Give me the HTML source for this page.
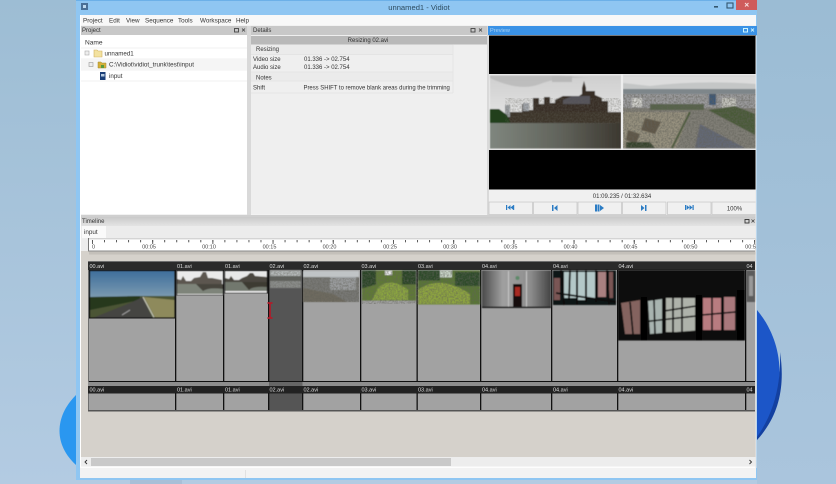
<!DOCTYPE html>
<html><head><meta charset="utf-8"><style>
html,body{margin:0;padding:0;width:836px;height:484px;overflow:hidden;background:#a6c2da}
svg{display:block;position:absolute;left:0;top:0}
text{font-family:"Liberation Sans",sans-serif;font-size:6px;fill:#333}
.w text{fill:#ddd;font-size:5.5px}
.r text{font-size:5.5px;fill:#444}
</style></head><body>
<svg width="836" height="484" viewBox="0 0 836 484" xmlns="http://www.w3.org/2000/svg">
<defs>
<linearGradient id="bg" x1="0" y1="0" x2="0" y2="1"><stop offset="0" stop-color="#9dbdd4"/><stop offset="1" stop-color="#b3cbe2"/></linearGradient>
<linearGradient id="bgr" x1="0" y1="0" x2="0" y2="1"><stop offset="0" stop-color="#9bbcd4"/><stop offset="1" stop-color="#aac5dd"/></linearGradient>
<linearGradient id="hd" x1="0" y1="0" x2="0" y2="1"><stop offset="0" stop-color="#c4c4c4"/><stop offset="1" stop-color="#e4e4e4"/></linearGradient>
<linearGradient id="sky1" x1="0" y1="0" x2="0" y2="1"><stop offset="0" stop-color="#3f6f9c"/><stop offset="0.6" stop-color="#7f9db2"/><stop offset="1" stop-color="#c0c8c4"/></linearGradient>
<linearGradient id="sky2" x1="0" y1="0" x2="0" y2="1"><stop offset="0" stop-color="#cfcfcf"/><stop offset="1" stop-color="#f2f2f2"/></linearGradient>
<linearGradient id="wat" x1="0" y1="0" x2="1" y2="0"><stop offset="0" stop-color="#7f867e"/><stop offset="0.55" stop-color="#60625a"/><stop offset="1" stop-color="#3c3830"/></linearGradient>
<linearGradient id="met" x1="0" y1="0" x2="1" y2="0"><stop offset="0" stop-color="#4a4a4a"/><stop offset="0.3" stop-color="#a0a0a0"/><stop offset="0.7" stop-color="#8e8e8e"/><stop offset="1" stop-color="#444"/></linearGradient>
<pattern id="t1" x="92" y="0" width="12.04" height="10" patternUnits="userSpaceOnUse"><rect x="0" y="0" width="0.8" height="3" fill="#666"/></pattern>
<pattern id="t2" x="92" y="0" width="60.2" height="10" patternUnits="userSpaceOnUse"><rect x="0" y="0" width="0.9" height="5" fill="#555"/></pattern>
<pattern id="t3" x="104" y="0" width="12.04" height="10" patternUnits="userSpaceOnUse"><rect x="0" y="0" width="0.9" height="3.600" fill="#222"/></pattern>
<filter id="b" x="-5%" y="-5%" width="110%" height="110%"><feGaussianBlur stdDeviation="0.55"/></filter>
<filter id="tb" x="-5%" y="-5%" width="110%" height="110%"><feGaussianBlur stdDeviation="0.25"/></filter>
<filter id="n" x="0" y="0" width="100%" height="100%"><feTurbulence type="fractalNoise" baseFrequency="0.55" numOctaves="2" seed="4"/><feColorMatrix values="0 0 0 0 .12  0 0 0 0 .12  0 0 0 0 .1  2.2 0 0 0 -.75"/></filter>
</defs>

<!-- desktop -->
<rect width="836" height="484" fill="url(#bg)"/>
<rect x="757" width="79" height="484" fill="url(#bgr)"/>
<path d="M76 395C54 417 54 445 76 465Z" fill="#2a97f0"/>
<path d="M757 310C786 345 788 395 757 440Z" fill="#1c56c8"/>
<path d="M757 437C776 410 781 380 780 352C785 385 780 415 757 440Z" fill="#1340a0"/>

<!-- window -->
<rect x="76" y="0" width="681" height="480" fill="#8fc6f2"/>
<rect x="76" y="0" width="681" height="1" fill="#6cb0e8"/>
<rect x="80" y="15" width="676" height="463" fill="#f2f2f2"/>
<rect x="80" y="15" width="676" height="10" fill="#f8f8f8"/>
<rect x="81" y="3" width="7" height="7" fill="#4a6f96"/>
<rect x="83" y="5" width="3" height="3" fill="#bcd8ee"/>
<text x="419" y="10" text-anchor="middle" style="font-size:7.6px;fill:#2e4c60">unnamed1 - Vidiot</text>
<rect x="736" y="0" width="21" height="10" fill="#cf5b5b"/>
<path d="M745 3l3.500 3.500M748.500 3L745 6.500" stroke="#f6dede" stroke-width="1"/>
<rect x="714" y="6" width="4" height="1.600" fill="#33566e"/>
<rect x="727" y="3" width="6" height="5" fill="none" stroke="#33566e" stroke-width="1.100"/>

<g filter="url(#tb)">
<text x="83" y="22.500" style="font-size:6.300px">Project</text><text x="109" y="22.500" style="font-size:6.300px">Edit</text><text x="126" y="22.500" style="font-size:6.300px">View</text>
<text x="145" y="22.500" style="font-size:6.300px">Sequence</text><text x="178" y="22.500" style="font-size:6.300px">Tools</text><text x="200" y="22.500" style="font-size:6.300px">Workspace</text><text x="236" y="22.500" style="font-size:6.300px">Help</text>
</g>

<!-- Project panel -->
<rect x="81" y="26" width="167" height="9" fill="#c8c8c8"/>
<text x="82" y="32">Project</text>
<rect x="234.500" y="28.500" width="4" height="3.500" fill="none" stroke="#444" stroke-width="0.900"/>
<path d="M242 28.500l3 3M245 28.500l-3 3" stroke="#444" stroke-width="0.800"/>
<rect x="81" y="35" width="166" height="179" fill="#fff"/>
<rect x="247" y="26" width="4" height="190" fill="#d9d9d9"/>
<text x="85" y="44.500" style="font-size:6.600px">Name</text>
<path d="M81 48H247M81 59H247M81 70H247M81 81H247" stroke="#eee" stroke-width="0.700"/>
<rect x="81" y="59" width="166" height="11" fill="#f5f5f5"/>
<rect x="85" y="51" width="4" height="4" fill="#eee" stroke="#aaa" stroke-width="0.600"/>
<path d="M94 50h3l1 1h4v6h-8z" fill="#f3e2a0" stroke="#d0b060" stroke-width="0.600"/>
<text x="104.500" y="55.500" style="font-size:6.200px">unnamed1</text>
<rect x="89" y="62.500" width="4" height="4" fill="#eee" stroke="#999" stroke-width="0.600"/>
<path d="M98 62h3l1 1h4v5h-8z" fill="#d5b03a" stroke="#a08a30" stroke-width="0.500"/>
<rect x="101" y="65" width="3" height="3" fill="#5a9a3a"/>
<text x="109" y="66.500" style="font-size:6.300px">C:\Vidiot\vidiot_trunk\test\input</text>
<rect x="100" y="72" width="5.500" height="8" fill="#1c3f78"/><rect x="101" y="74" width="3.500" height="2.500" fill="#b8cce0"/>
<text x="109" y="78" style="font-size:6.200px">input</text>

<!-- Details panel -->
<rect x="251" y="26" width="236" height="9" fill="#c8c8c8"/>
<text x="253" y="32">Details</text>
<rect x="471" y="28.500" width="4" height="3.500" fill="none" stroke="#444" stroke-width="0.900"/>
<path d="M479 28.500l3 3M482 28.500l-3 3" stroke="#444" stroke-width="0.800"/>
<rect x="251" y="35" width="236" height="179" fill="#efefef"/>
<rect x="251" y="36" width="236" height="8.500" fill="#b9b9b9"/>
<text x="368" y="42" text-anchor="middle">Resizing 02.avi</text>
<rect x="251" y="44.500" width="202" height="10" fill="#ebebeb"/>
<rect x="251" y="72" width="202" height="9" fill="#ebebeb"/>
<path d="M251 54.500H453M251 72H453M251 81H453M251 93H453M453 45V93" stroke="#e2e2e2" stroke-width="0.700"/>
<text x="256" y="51">Resizing</text>
<text x="253" y="61">Video size</text><text x="304" y="61">01.336 -&gt; 02.754</text>
<text x="253" y="69">Audio size</text><text x="304" y="69">01.336 -&gt; 02.754</text>
<text x="256" y="79.500">Notes</text>
<text x="253" y="89.500">Shift</text><text x="303.500" y="89.500" style="font-size:5.930px">Press SHIFT to remove blank areas during the trimming</text>
<rect x="487" y="26" width="2" height="190" fill="#d9d9d9"/>

<!-- Preview panel -->
<rect x="488" y="26" width="269" height="9" fill="#3a92e6"/>
<text x="490" y="32" style="fill:#a8d0f2;font-size:5.600px">Preview</text>
<rect x="743.500" y="28.500" width="4" height="3.500" fill="none" stroke="#dff" stroke-width="0.900"/>
<path d="M751 28.500l3 3M754 28.500l-3 3" stroke="#dff" stroke-width="0.800"/>
<rect x="489" y="35.500" width="267" height="154" fill="#000"/>
<rect x="489" y="74" width="267" height="76" fill="#e8e8e8"/>
<g filter="url(#b)">
<rect x="490" y="75.500" width="131" height="73" fill="url(#sky2)"/>
<path d="M490 78Q520 92 540 84T590 78L560 75.500H490Z" fill="#b4b4b4" opacity=".7"/>
<rect x="552" y="76" width="20" height="6" fill="#b8b8b8"/>
<path d="M505 122V106h5v6h12V104h5v6h6V98h6v6h5V97h6v6h5v-3l8-4h16l3-2V88l2-7 2 7v3h9v4l7 3v3h6V124H505Z" fill="#372e26"/>
<path d="M563 100L572 96H590V104H563Z" fill="#55525a"/>
<rect x="505" y="105" width="5" height="12" fill="#9ca0a4"/><rect x="523" y="103" width="6" height="8" fill="#a0a4aa"/>
<path d="M490 109h9l8 6 4 9H490Z" fill="#24401f"/>
<path d="M510 112H621V124H510Z" fill="#3e342a"/>
<rect x="490" y="123" width="131" height="25.500" fill="url(#wat)"/>
<rect x="623" y="75.500" width="133" height="73" fill="#807e76"/>
<rect x="623" y="75.500" width="133" height="16" fill="#c4c6c6"/>
<path d="M623 76H756V84Q700 80 650 86L623 83Z" fill="#dcdcdc"/>
<rect x="623" y="89" width="133" height="5" fill="#7e868a"/>
<path d="M623 94H756V108H623Z" fill="#9a9a9c"/>
<path d="M650 104H704V110H650Z" fill="#56644a"/>
<rect x="709" y="94" width="7" height="11" fill="#3d5878"/><rect x="632" y="98" width="10" height="9" fill="#d4d4d0"/><rect x="722" y="98" width="14" height="12" fill="#c4c4be"/>
<path d="M708 110L755 135V114L735 106Z" fill="#4a5a38"/>
<path d="M623 112H690L676 148H623Z" fill="#96907e"/>
<path d="M645 118l16 4-6 12-14-4ZM628 130l12 4-4 10-10-4Z" fill="#5e5646"/>
<path d="M700 124L745 148H695Z" fill="#646874"/>
<path d="M626 142H650L655 148H626Z" fill="#36422a"/>
<path d="M690 112L672 148" stroke="#4a5a38" stroke-width="2"/>
</g>
<rect x="505" y="98" width="116" height="26" filter="url(#n)" opacity=".35"/>
<rect x="623" y="94" width="133" height="54" filter="url(#n)" opacity=".6"/>
<rect x="621" y="74" width="2" height="76" fill="#eee"/>
<rect x="489" y="190" width="267" height="11" fill="#f0f0f0"/>
<text x="622" y="198" text-anchor="middle" style="font-size:6px">01:09.235 / 01:32.634</text>
<g fill="#f0f0f0" stroke="#c4c4c4" stroke-width="0.700">
<rect x="489" y="202" width="43.500" height="12.500"/><rect x="533.500" y="202" width="43.500" height="12.500"/><rect x="578" y="202" width="43.500" height="12.500"/><rect x="622.500" y="202" width="43.500" height="12.500"/><rect x="667.500" y="202" width="43.500" height="12.500"/><rect x="712" y="202" width="44" height="12.500"/>
</g>
<g fill="#2b7cc4">
<path d="M506 205h1.200v5h-1.200zM507.500 207.500l3-2.500v5zM510.500 207.500l3-2.500v5zM513.200 205h1v5h-1z"/>
<path d="M552 205h1.500v6H552zM554 208l3.500-3v6z"/>
<path d="M595 204.500h2v7h-2zM597.500 204.500h2v7h-2zM600 205l4 3-4 3z"/>
<path d="M641 205l3.500 3-3.500 3zM645 205h1.500v6H645z"/>
<path d="M685 205h1v5h-1zM686.500 205l3 2.500-3 2.500zM689.500 205l3 2.500-3 2.500zM692.500 205h1.200v5h-1.200z"/>
</g>
<text x="734.500" y="210.500" text-anchor="middle">100%</text>

<!-- Timeline panel -->
<rect x="80" y="215" width="676" height="11" fill="url(#hd)"/>
<rect x="80" y="215" width="676" height="2" fill="#cfcfcf"/>
<text x="82" y="223">Timeline</text>
<rect x="745" y="219.500" width="4" height="3.500" fill="none" stroke="#333" stroke-width="0.900"/>
<path d="M751.500 219.500l3 3M754.500 219.500l-3 3" stroke="#444" stroke-width="0.800"/>
<rect x="80" y="226" width="676" height="12" fill="#ececec"/>
<rect x="82" y="226" width="24" height="12" fill="#fafafa"/>
<text x="84" y="234" style="font-size:6.300px">input</text>
<rect x="80" y="238" width="676" height="219" fill="#d5d1cb"/>
<rect x="80" y="238" width="8" height="13" fill="#ededed"/>
<rect x="88" y="238" width="667" height="13" fill="#fff"/>
<rect x="88" y="238" width="1" height="13" fill="#777"/>
<rect x="88" y="250.500" width="667" height="1" fill="#8a8a8a"/>
<rect x="89" y="251.500" width="667" height="3" fill="#c4c0ba"/>
<rect x="89" y="238.500" width="666" height="0.700" fill="#aaa"/>
<rect x="89" y="239" width="666" height="3" fill="url(#t1)"/>
<rect x="89" y="239" width="666" height="3.600" fill="url(#t3)" opacity=".45"/>
<rect x="89" y="239" width="666" height="5" fill="url(#t2)"/>
<g class="r" filter="url(#tb)">
<text x="92" y="248.500">0</text>
<text x="149" y="248.500" text-anchor="middle">00:05</text>
<text x="209" y="248.500" text-anchor="middle">00:10</text>
<text x="269.500" y="248.500" text-anchor="middle">00:15</text>
<text x="329.500" y="248.500" text-anchor="middle">00:20</text>
<text x="390" y="248.500" text-anchor="middle">00:25</text>
<text x="450" y="248.500" text-anchor="middle">00:30</text>
<text x="510.500" y="248.500" text-anchor="middle">00:35</text>
<text x="570.500" y="248.500" text-anchor="middle">00:40</text>
<text x="630.500" y="248.500" text-anchor="middle">00:45</text>
<text x="690.500" y="248.500" text-anchor="middle">00:50</text>
<text x="750.500" y="248.500" text-anchor="middle">00:5</text>
</g>

<!-- Video track -->
<rect x="88" y="261" width="667" height="150" fill="#6e6e6e"/>
<rect x="88" y="262" width="667" height="8" fill="#2a2a2a"/>
<rect x="89" y="270" width="666" height="112" fill="#a2a2a2"/>
<rect x="88" y="382" width="667" height="4" fill="#8e8e8e"/>
<rect x="88" y="386" width="667" height="7.500" fill="#222"/>
<rect x="89" y="393.500" width="666" height="16.500" fill="#a2a2a2"/>
<rect x="88" y="410" width="667" height="1.500" fill="#555"/>
<rect x="269" y="270" width="33.500" height="112" fill="#555"/>
<rect x="269" y="393.500" width="33.500" height="16.500" fill="#555"/>
<rect x="269" y="382" width="33.500" height="4" fill="#666"/>
<g fill="#111">
<rect x="175" y="270" width="1.300" height="112"/><rect x="223" y="270" width="1.300" height="112"/><rect x="268" y="270" width="1.300" height="112"/><rect x="302" y="270" width="1.300" height="112"/><rect x="360" y="270" width="1.300" height="112"/><rect x="416.500" y="270" width="1.300" height="112"/><rect x="480" y="270" width="1.300" height="112"/><rect x="551" y="270" width="1.300" height="112"/><rect x="617" y="270" width="1.300" height="112"/><rect x="745" y="270" width="1.300" height="112"/>
<rect x="175" y="393" width="1.300" height="17"/><rect x="223" y="393" width="1.300" height="17"/><rect x="268" y="393" width="1.300" height="17"/><rect x="302" y="393" width="1.300" height="17"/><rect x="360" y="393" width="1.300" height="17"/><rect x="416.500" y="393" width="1.300" height="17"/><rect x="480" y="393" width="1.300" height="17"/><rect x="551" y="393" width="1.300" height="17"/><rect x="617" y="393" width="1.300" height="17"/><rect x="745" y="393" width="1.300" height="17"/>
<rect x="89" y="381" width="666" height="1"/>
</g>
<g class="w">
<text x="89.500" y="268">00.avi</text><text x="177" y="268">01.avi</text><text x="225" y="268">01.avi</text><text x="269.500" y="268">02.avi</text><text x="303.500" y="268">02.avi</text><text x="361.500" y="268">03.avi</text><text x="418" y="268">03.avi</text><text x="482" y="268">04.avi</text><text x="553" y="268">04.avi</text><text x="618.500" y="268">04.avi</text><text x="746.500" y="268">04</text>
<text x="89.500" y="391.500">00.avi</text><text x="177" y="391.500">01.avi</text><text x="225" y="391.500">01.avi</text><text x="269.500" y="391.500">02.avi</text><text x="303.500" y="391.500">02.avi</text><text x="361.500" y="391.500">03.avi</text><text x="418" y="391.500">03.avi</text><text x="482" y="391.500">04.avi</text><text x="553" y="391.500">04.avi</text><text x="618.500" y="391.500">04.avi</text><text x="746.500" y="391.500">04</text>
</g>

<!-- thumbnails -->
<rect x="89" y="270" width="86" height="48.500" fill="#111"/>
<rect x="176.500" y="270" width="46.500" height="25.500" fill="#111"/>
<rect x="224.500" y="270" width="43.500" height="23.500" fill="#111"/>
<g filter="url(#b)">
<!-- 1 road -->
<rect x="90" y="271" width="84.500" height="46.500" fill="url(#sky1)"/>
<path d="M90 299L140 296H174.500V317.500H90Z" fill="#4c5434"/>
<path d="M90 297L140 296V300L90 310Z" fill="#25381f"/>
<path d="M94 317.500L130 303 143 297 152 317.500Z" fill="#454442"/>
<path d="M144 297L174.500 300V317.500H155Z" fill="#8e8a5c"/>
<path d="M143 297l11 20.500" stroke="#c8c8b8" stroke-width="1.200"/>
<path d="M122 315l8-5" stroke="#aaa" stroke-width="0.800"/>
<!-- 2 -->
<rect x="177" y="271" width="46" height="24" fill="#eaeaea"/>
<path d="M177 279l4 1 2-4 3 5h5l3-3 6-1 3-5h3l2 6h4l10 2v7H177Z" fill="#5c5650"/>
<path d="M177 284h46v10H177Z" fill="#7e847a"/>
<path d="M196 284h27v5q-14-2-20 2Z" fill="#47443c"/>
<!-- 3 -->
<rect x="225" y="271" width="42" height="22" fill="#e8e8e8"/>
<path d="M225 278l4 1 2-3 3 4h5l3-2 5-2 3-3h3l2 3 12 1v7H225Z" fill="#4c4740"/>
<path d="M225 282h42v9H225Z" fill="#72786e"/>
<path d="M242 282h25v5q-14-1-18 3Z" fill="#3d3a32"/>
<!-- 4 -->
<rect x="270" y="270" width="31" height="18" fill="#8a8c8a"/>
<rect x="270" y="271" width="31" height="5" fill="#b4b8b8"/>
<rect x="270" y="276" width="31" height="5" fill="#5e605c"/>
<!-- 5 -->
<rect x="303" y="271" width="56" height="31" fill="#787874"/>
<rect x="303" y="271" width="56" height="6" fill="#c0c4c6"/>
<path d="M303 288l30 6 14 8H303Z" fill="#6e6a5e"/>
<path d="M330 277h26v13h-26Z" fill="#9a9c9e"/>
<!-- 6 -->
<rect x="362" y="270.500" width="54" height="30" fill="#5e7a34"/>
<path d="M362 270.500h14v14l-14 4ZM402 270.500h14v14h-14Z" fill="#2c4426"/>
<path d="M378 288Q390 276 408 290V300H372Z" fill="#8aa440"/>
<rect x="385" y="271" width="7" height="4" fill="#eee"/>
<!-- 7 -->
<rect x="418" y="270.500" width="62" height="34" fill="#597536"/>
<path d="M418 270.500h22v10h-22ZM455 272h25v14h-25Z" fill="#2f4c2a"/>
<path d="M440 270.500h12v7h-12Z" fill="#c8d4c8"/>
<path d="M418 290Q440 274 470 294V304H418Z" fill="#8da440"/>
<!-- 8 -->
<rect x="482" y="270.500" width="69" height="37.500" fill="url(#met)"/>
<rect x="508" y="271" width="1" height="37" fill="#c8c8c8"/>
<rect x="526" y="271" width="1" height="37" fill="#c8c8c8"/>
<rect x="513" y="284" width="9" height="24" fill="#140c0a"/>
<rect x="515" y="287" width="5" height="9" fill="#a82a20"/>
<circle cx="517.500" cy="278" r="2" fill="#5e8a6a"/>
<rect x="482" y="306.500" width="69" height="1.500" fill="#1a1a1a"/>
<!-- 9 -->
<rect x="553" y="270.500" width="63" height="34.500" fill="#101414"/>
<path d="M564 272h12v26h-12ZM578 272h7v28h-7ZM587 272h8v26h-8Z" fill="#b4c8c8"/>
<path d="M598 272h8v25h-8Z" fill="#a88080"/>
<path d="M554 278h6v22h-6ZM609 272h4v26h-4Z" fill="#7a5654"/>
<path d="M561 270l3 35M570 270l-1 30M577 270v34M586 270v32M596 270v32M607 270l2 35M556 293L616 302" stroke="#0a0c0c" stroke-width="1.800"/>
<!-- 10 -->
<rect x="618" y="270" width="127" height="70.500" fill="#070707"/>
<path d="M621 303L640 300V334H625Z" fill="#84645e"/>
<path d="M648 301L662 299V334H650Z" fill="#a8b4b0"/>
<path d="M666 298H695V332H666Z" fill="#aeb2aa"/>
<path d="M703 298H721V330H703Z" fill="#b87c80"/>
<path d="M724 297H735V330H724Z" fill="#a8787c"/>
<path d="M654 300l1 34M673 298V333M682 298V333M712 298V332M630 302l3 32M642 322L696 316M664 311L696 306M702 315L735 312M620 337L700 331" stroke="#0c0c0c" stroke-width="1.600"/>
<rect x="641" y="297" width="6" height="43" fill="#060606"/>
<rect x="696" y="295" width="6" height="45" fill="#060606"/>
<rect x="737" y="290" width="8" height="50" fill="#060606"/>
<!-- 11 -->
<rect x="746.500" y="270.500" width="8.500" height="31.500" fill="#5c5c5c"/>
<rect x="749" y="276" width="4" height="20" fill="#999"/>
</g>
<rect x="362" y="271" width="118" height="33" filter="url(#n)" opacity=".55"/>
<rect x="303" y="278" width="56" height="24" filter="url(#n)" opacity=".55"/>
<rect x="270" y="271" width="31" height="17" filter="url(#n)" opacity=".4"/>

<!-- trim cursor -->
<path d="M270 303v15M267.500 303h5M267.500 318h5" stroke="#b01c2a" stroke-width="1.700" fill="none"/>

<!-- scrollbar -->
<rect x="80" y="457" width="676" height="10" fill="#ededed"/>
<rect x="91" y="458" width="360" height="8" fill="#c9c9c9"/>
<path d="M87 460l-2 2 2 2" stroke="#333" stroke-width="0.900" fill="none"/>
<path d="M749.500 460l2 2-2 2" stroke="#333" stroke-width="0.900" fill="none"/>
<rect x="80" y="466.500" width="676" height="1.500" fill="#fdfdfd"/>
<rect x="80" y="468" width="676" height="10" fill="#f3f3f3"/>
<rect x="245" y="470" width="0.800" height="8" fill="#ddd"/>
<rect x="80" y="15" width="1" height="452" fill="#fff"/>
<rect x="755.500" y="36" width="1" height="432" fill="#e8e8e8"/>
<rect x="76" y="478" width="681" height="2" fill="#8fc6f2"/>
<rect x="130" y="480" width="52" height="4" fill="#a0b8d0" opacity=".6"/>
</svg>
</body></html>
